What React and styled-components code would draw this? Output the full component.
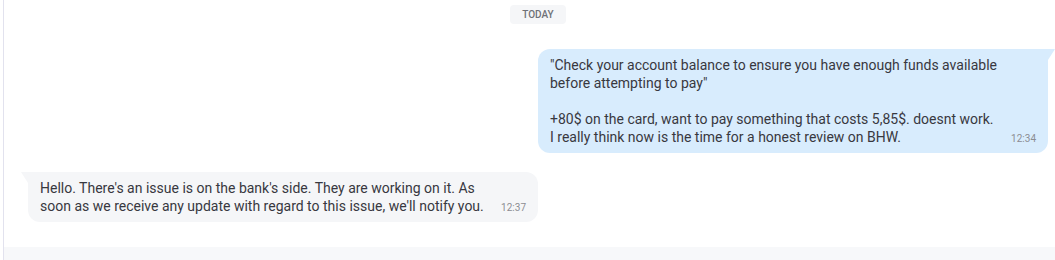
import styled, { createGlobalStyle } from 'styled-components';

const GlobalStyle = createGlobalStyle`
  html, body {
    margin: 0;
    padding: 0;
    background: #ffffff;
    font-family: Roboto, "Liberation Sans", Arial, sans-serif;
  }
`;

const messages = [
  {
    id: 1,
    own: true,
    time: '12:34',
    text:
      '"Check your account balance to ensure you have enough funds available\nbefore attempting to pay"\n\n+80$ on the card, want to pay something that costs 5,85$. doesnt work.\nI really think now is the time for a honest review on BHW.',
  },
  {
    id: 2,
    own: false,
    time: '12:37',
    text:
      "Hello. There's an issue is on the bank's side. They are working on it. As\nsoon as we receive any update with regard to this issue, we'll notify you.",
  },
];

const App = () => {
  return (
    <>
      <GlobalStyle />
      <ChatPanel>
        <MessageList>
          <DayLabel>Today</DayLabel>
          {messages.map(message => (
            <Row key={message.id} $own={message.own}>
              <Bubble $own={message.own}>
                {message.text}
                <Time>{message.time}</Time>
              </Bubble>
            </Row>
          ))}
        </MessageList>
        <Composer />
      </ChatPanel>
    </>
  );
};

export default App;

const ChatPanel = styled.div`
  margin-left: 3px;
  height: 260px;
  border-left: 1px solid #e2e2ee;
  display: flex;
  flex-direction: column;
`;

const MessageList = styled.div`
  height: 247px;
  box-sizing: border-box;
  padding: 5px 7px 0 24px;
  display: flex;
  flex-direction: column;
`;

const DayLabel = styled.div`
  align-self: center;
  padding: 0 12px;
  height: 19px;
  line-height: 19px;
  border-radius: 4px;
  background: #f5f6f8;
  color: #6f7177;
  font-size: 10px;
  font-weight: 500;
  text-transform: uppercase;
  margin-bottom: 25px;
`;

const Row = styled.div`
  display: flex;
  justify-content: ${p => (p.$own ? 'flex-end' : 'flex-start')};
  margin-bottom: 19px;
`;

const Bubble = styled.div`
  position: relative;
  width: 510px;
  box-sizing: border-box;
  padding: 7px 12px;
  font-size: 14px;
  line-height: 18px;
  color: #38383f;
  white-space: pre-line;
  background: ${p => (p.$own ? '#d8ecfd' : '#f5f6f8')};
  border-radius: ${p => (p.$own ? '12px 0 12px 12px' : '0 12px 12px 12px')};

  &::before {
    content: '';
    position: absolute;
    top: 0;
    ${p => (p.$own ? 'right: -7px;' : 'left: -7px;')}
    border-top: 11px solid ${p => (p.$own ? '#d8ecfd' : '#f5f6f8')};
    ${p =>
      p.$own
        ? 'border-right: 7px solid transparent;'
        : 'border-left: 7px solid transparent;'}
  }
`;

const Time = styled.span`
  float: right;
  margin: 4px 0 0 12px;
  font-size: 10px;
  line-height: 14px;
  color: #8c8d92;
`;

const Composer = styled.div`
  flex: 1;
  background: #f7f8fa;
`;
